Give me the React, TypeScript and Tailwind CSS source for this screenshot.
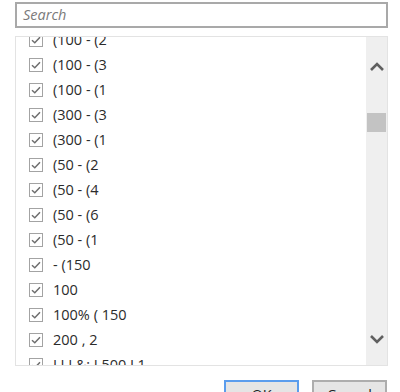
const items = [
  '(100 - (2',
  '(100 - (3',
  '(100 - (1',
  '(300 - (3',
  '(300 - (1',
  '(50 - (2',
  '(50 - (4',
  '(50 - (6',
  '(50 - (1',
  '- (150',
  '100',
  '100% ( 150',
  '200 , 2',
  'LLL&; L500 L1',
]

function Check() {
  return (
    <span className="flex h-[14px] w-[14px] shrink-0 items-center justify-center border border-[#a3a3a3] bg-white">
      <svg width="10" height="8" viewBox="0 0 10 8" fill="none">
        <path d="M1 4.2 L3.8 6.8 L9 1.2" stroke="#6e6e6e" strokeWidth="1.5" />
      </svg>
    </span>
  )
}

export default function App() {
  return (
    <div
      className="flex h-[392px] w-[400px] flex-col overflow-hidden bg-white pl-[15px] pr-[12px] pt-[2px] text-[14.5px] text-[#2b2b2b]"
      style={{ fontFamily: '"Segoe UI", "Open Sans", "Noto Sans", sans-serif' }}
    >
      {/* Search */}
      <div className="flex h-[27px] items-center border-2 border-[#a9a9a9] px-[6px]">
        <span className="italic text-[#7a7a7a]">Search</span>
      </div>

      {/* List */}
      <div className="mt-[8px] flex h-[330px] border border-[#e3e3e3]">
        <div className="flex-1 overflow-hidden">
          <div className="-mt-[9px]">
            {items.map((item) => (
              <div key={item} className="flex h-[25px] items-center gap-[10px] pl-[13px]">
                <Check />
                <span className="whitespace-nowrap leading-none">{item}</span>
              </div>
            ))}
          </div>
        </div>

        {/* Scrollbar */}
        <div className="flex w-[21px] flex-col items-center bg-[#efefef] pt-[25px]">
          <svg width="14" height="9" viewBox="0 0 14 9">
            <path d="M1 8 L7 2 L13 8" stroke="#606060" strokeWidth="2.6" fill="none" />
          </svg>
          <div className="mt-[42px] h-[19px] w-[19px] bg-[#c3c3c3]" />
          <div className="flex-1" />
          <svg width="14" height="9" viewBox="0 0 14 9" className="mb-[21px]">
            <path d="M1 1 L7 7 L13 1" stroke="#606060" strokeWidth="2.6" fill="none" />
          </svg>
        </div>
      </div>

      {/* Buttons */}
      <div className="mt-[14px] flex justify-end gap-[13px] pr-[1px]">
        <div className="flex h-[26px] w-[75px] justify-center border-2 border-[#5b9ded] bg-[#e5e5e5] pt-[3px] leading-[20px] text-[#222]">
          OK
        </div>
        <div className="flex h-[26px] w-[75px] justify-center border-2 border-[#adadad] bg-[#e5e5e5] pt-[3px] leading-[20px] text-[#222]">
          Cancel
        </div>
      </div>
    </div>
  )
}
